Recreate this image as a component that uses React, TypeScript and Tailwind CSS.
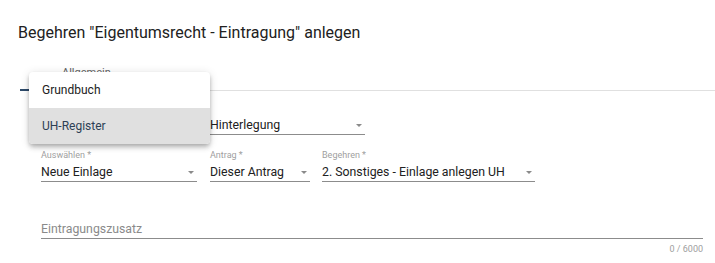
import React from "react";

interface SelectFieldProps {
  label?: string;
  value: string;
  width: string;
}

const SelectField: React.FC<SelectFieldProps> = ({ label, value, width }) => {
  return (
    <div className={`${width} flex flex-col`}>
      <div className="h-[14px] text-[9px] leading-[12px] text-[#a0a0a0]">
        {label ?? ""}
      </div>
      <div className="flex h-[19px] items-center justify-between border-b border-[#8c8c8c] pr-[3px] text-[12.3px] leading-[18px] text-[#212121]">
        <span>{value}</span>
        {/* arrow */}
        <span className="h-0 w-0 border-x-[3px] border-t-[3px] border-x-transparent border-t-[#8a8a8a]" />
      </div>
    </div>
  );
};

export default function App() {
  return (
    <div
      className="relative h-[263px] w-[715px] overflow-hidden bg-white"
      style={{ fontFamily: "Roboto, 'Noto Sans', sans-serif" }}
    >
      {/* Title */}
      <div className="pl-[18px] pt-[23px] text-[16px] leading-[20px] text-[#212121]">
        Begehren "Eigentumsrecht - Eintragung" anlegen
      </div>

      {/* Tabs */}
      <div className="ml-[20px] mt-[19px] flex h-[29px] border-b border-[#e0e0e0]">
        <div className="relative flex w-[120px] items-center pl-[42px] text-[11px] text-[#616161]">
          <span className="-mt-[6px]">Allgemein</span>
          <div className="absolute bottom-[-1px] left-0 h-[2px] w-full bg-[#2d4a6a]" />
        </div>
      </div>

      {/* Form */}
      <div className="flex flex-col pl-[41px] pr-[12px]">
        <div className="mt-[11px] flex gap-[13px]">
          <SelectField value="UH-Register" width="w-[156px]" />
          <SelectField value="Hinterlegung" width="w-[155px]" />
        </div>

        <div className="mt-[14px] flex gap-[13px]">
          <SelectField label="Auswählen *" value="Neue Einlage" width="w-[156px]" />
          <SelectField label="Antrag *" value="Dieser Antrag" width="w-[100px]" />
          <div className="-ml-[1px]">
            <SelectField
              label="Begehren *"
              value="2. Sonstiges - Einlage anlegen UH"
              width="w-[213px]"
            />
          </div>
        </div>

        <div className="mt-[38px] flex h-[19px] items-center border-b border-[#8c8c8c] text-[12.3px] leading-[18px] text-[#8a8a8a]">
          Eintragungszusatz
        </div>
        <div className="mt-[4px] text-right text-[9px] leading-[12px] text-[#9e9e9e]">
          0 / 6000
        </div>
      </div>

      {/* Open dropdown menu */}
      <div className="absolute left-[29px] top-[72px] w-[181px] overflow-hidden rounded-[4px] bg-white shadow-[0_2px_4px_-1px_rgba(0,0,0,0.2),0_4px_5px_0_rgba(0,0,0,0.14),0_1px_10px_0_rgba(0,0,0,0.12)]">
        <div className="flex h-[36px] items-center px-[13px] text-[12px] text-[#212121]">
          Grundbuch
        </div>
        <div className="flex h-[36px] items-center bg-[#e0e0e0] px-[13px] text-[12px] text-[#2d3f55]">
          UH-Register
        </div>
      </div>
    </div>
  );
}
